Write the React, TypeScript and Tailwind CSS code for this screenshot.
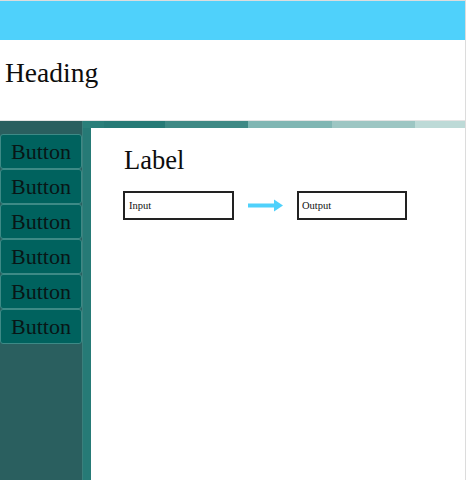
import React from "react";

const serif = { fontFamily: '"Liberation Serif", "Times New Roman", serif' };

export default function App() {
  const buttons = ["Button", "Button", "Button", "Button", "Button", "Button"];
  return (
    <div className="w-[466px] h-[480px] flex flex-col border-t border-r border-[#dcdcdc] bg-white overflow-hidden" style={serif}>
      <div className="h-[39px] bg-[#4fd1fb] shrink-0" />
      <div className="h-[81px] shrink-0 border-b border-[#e4e4e4] pl-[5px] pt-[19px]">
        <h1 className="text-[27.5px] leading-none text-[#0d0d0d]">Heading</h1>
      </div>
      <div className="flex flex-1 min-h-0">
        <div className="w-[83px] shrink-0 bg-[#2a5f5f] border-r border-[#3b7f7c] pt-[13px] flex flex-col">
          {buttons.map((b, i) => (
            <div
              key={i}
              className="h-[35px] flex items-center justify-center pt-[1px] rounded-[3px] border border-[#3d8a86] bg-[#00625e] text-[22px] leading-none text-[#081616]"
            >
              {b}
            </div>
          ))}
        </div>
        <div className="flex-1 flex flex-col min-w-0">
          <div className="h-[7px] flex shrink-0">
            <div className="w-[21px] bg-[#2a7f7a]" />
            <div className="w-[61px] bg-[#267a76]" />
            <div className="w-[83px] bg-[#3f8985]" />
            <div className="w-[84px] bg-[#80b6b3]" />
            <div className="w-[83px] bg-[#9dc6c3]" />
            <div className="flex-1 bg-[#bddad7]" />
          </div>
          <div className="flex flex-1">
            <div className="w-[8px] bg-[#267a76] shrink-0" />
            <div className="flex-1 pl-[32px] pt-[19px]">
              <div className="ml-[1px] text-[26.5px] leading-none text-[#0d0d0d]">Label</div>
              <div className="flex items-center mt-[17px]">
                <div className="w-[111px] h-[29px] border-2 border-[#222] flex items-center pl-[4px] pt-[1px] text-[10.5px] text-[#111]">
                  Input
                </div>
                <svg width="35" height="13" viewBox="0 0 35 13" className="mx-[14px]">
                  <rect x="0" y="4.5" width="28" height="4" fill="#4fd1fb" />
                  <polygon points="26,0.5 35,6.5 26,12.5" fill="#4fd1fb" />
                </svg>
                <div className="w-[110px] h-[29px] border-2 border-[#222] flex items-center pl-[3px] pt-[1px] text-[10.5px] text-[#111]">
                  Output
                </div>
              </div>
            </div>
          </div>
        </div>
      </div>
    </div>
  );
}
